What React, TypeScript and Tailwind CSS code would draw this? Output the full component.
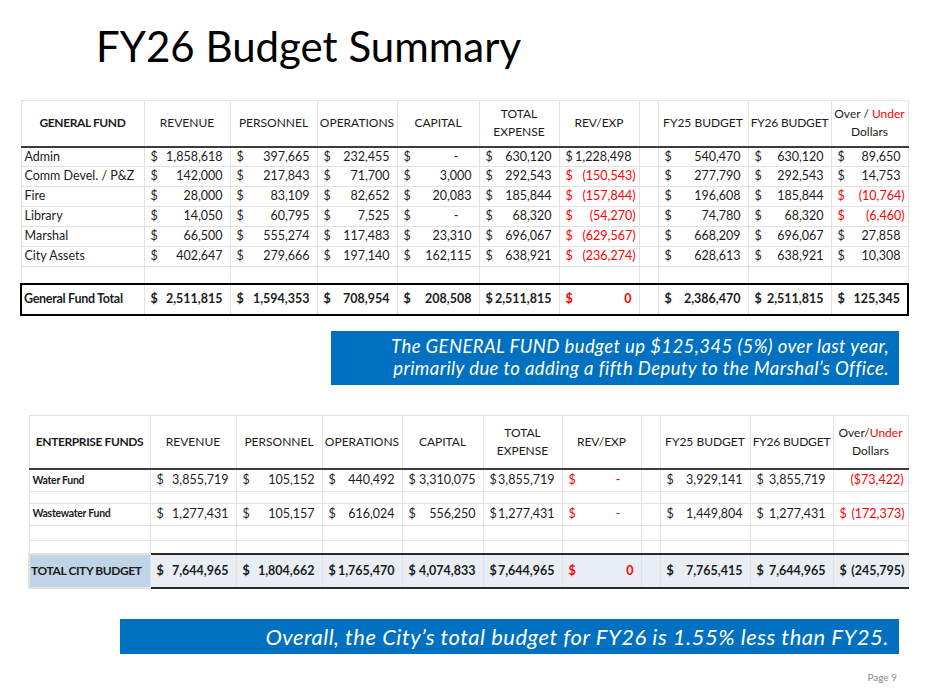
import React from "react";

type Cell =
  | { kind: "money"; v: string; red?: boolean; neg?: boolean }
  | { kind: "dash"; red?: boolean }
  | { kind: "plain"; v: string; red?: boolean }
  | { kind: "empty" };

const m = (v: string, red = false): Cell => ({ kind: "money", v, red, neg: v.startsWith("(") });
const dash = (red = false): Cell => ({ kind: "dash", red });
const plain = (v: string, red = false): Cell => ({ kind: "plain", v, red });
const E: Cell = { kind: "empty" };

const generalRows: { label: string; cells: Cell[] }[] = [
  { label: "Admin", cells: [m("1,858,618"), m("397,665"), m("232,455"), dash(), m("630,120"), m("1,228,498"), E, m("540,470"), m("630,120"), m("89,650")] },
  { label: "Comm Devel. / P&Z", cells: [m("142,000"), m("217,843"), m("71,700"), m("3,000"), m("292,543"), m("(150,543)", true), E, m("277,790"), m("292,543"), m("14,753")] },
  { label: "Fire", cells: [m("28,000"), m("83,109"), m("82,652"), m("20,083"), m("185,844"), m("(157,844)", true), E, m("196,608"), m("185,844"), m("(10,764)", true)] },
  { label: "Library", cells: [m("14,050"), m("60,795"), m("7,525"), dash(), m("68,320"), m("(54,270)", true), E, m("74,780"), m("68,320"), m("(6,460)", true)] },
  { label: "Marshal", cells: [m("66,500"), m("555,274"), m("117,483"), m("23,310"), m("696,067"), m("(629,567)", true), E, m("668,209"), m("696,067"), m("27,858")] },
  { label: "City Assets", cells: [m("402,647"), m("279,666"), m("197,140"), m("162,115"), m("638,921"), m("(236,274)", true), E, m("628,613"), m("638,921"), m("10,308")] },
];

const generalTotal: Cell[] = [m("2,511,815"), m("1,594,353"), m("708,954"), m("208,508"), m("2,511,815"), m("0", true), E, m("2,386,470"), m("2,511,815"), m("125,345")];

const enterpriseRows: { label: string; cells: Cell[] }[] = [
  { label: "Water Fund", cells: [m("3,855,719"), m("105,152"), m("440,492"), m("3,310,075"), m("3,855,719"), dash(true), E, m("3,929,141"), m("3,855,719"), plain("($73,422)", true)] },
  { label: "Wastewater Fund", cells: [m("1,277,431"), m("105,157"), m("616,024"), m("556,250"), m("1,277,431"), dash(true), E, m("1,449,804"), m("1,277,431"), m("(172,373)", true)] },
];

const cityTotal: Cell[] = [m("7,644,965"), m("1,804,662"), m("1,765,470"), m("4,074,833"), m("7,644,965"), m("0", true), E, m("7,765,415"), m("7,644,965"), m("(245,795)")];

function CellBody({ c }: { c: Cell }) {
  if (c.kind === "empty") return null;
  if (c.kind === "plain")
    return <div className={`text-right pr-[4px] ${c.red ? "text-[#ff0000]" : ""}`}>{c.v}</div>;
  if (c.kind === "dash")
    return (
      <div className={`flex justify-between pl-[6px] pr-[20px] ${c.red ? "text-[#ff0000]" : ""}`}>
        <span>$</span>
        <span>-</span>
      </div>
    );
  return (
    <div className={`flex justify-between pl-[6px] ${c.neg ? "pr-[3px]" : "pr-[7px]"} ${c.red ? "text-[#ff0000]" : ""}`}>
      <span>$</span>
      <span>{c.v}</span>
    </div>
  );
}

const grid = "border border-[#e2e2e2]";

function Header({ first, overSep }: { first: string; overSep: string }) {
  const th = `${grid} border-b-2 border-b-[#3c3c3c] font-normal text-center leading-[18px] px-0 whitespace-nowrap text-[12px]`;
  return (
    <tr>
      <th className={`${grid} border-b-2 border-b-[#3c3c3c] font-bold text-center tracking-[-0.4px] whitespace-nowrap text-[12px]`}>{first}</th>
      <th className={th}>REVENUE</th>
      <th className={th}>PERSONNEL</th>
      <th className={th}>OPERATIONS</th>
      <th className={th}>CAPITAL</th>
      <th className={th}>TOTAL<br />EXPENSE</th>
      <th className={th}>REV/EXP</th>
      <th className={th}></th>
      <th className={th}>FY25 BUDGET</th>
      <th className={`${th} tracking-[-0.2px]`}>FY26 BUDGET</th>
      <th className={th}>
        Over{overSep}<span className="text-[#ff0000]">Under</span>
        <br />
        Dollars
      </th>
    </tr>
  );
}

function Cols({ widths }: { widths: string[] }) {
  return (
    <colgroup>
      {widths.map((w, i) => (
        <col key={i} className={w} />
      ))}
    </colgroup>
  );
}

export default function App() {
  return (
    <div className="w-[935px] h-[695px] bg-white text-[#1c1c1c] overflow-hidden" style={{ fontFamily: "Lato, 'Open Sans', sans-serif" }}>
      <div className="h-[100px] pl-[96px] pt-[21px]">
        <h1 className="text-[42px] leading-[50px] text-black">FY26 Budget Summary</h1>
      </div>

      {/* general fund */}
      <table className="ml-[20px] w-[887px] table-fixed border-collapse text-[12.5px]">
        <Cols widths={["w-[123px]", "w-[86px]", "w-[87px]", "w-[80px]", "w-[82px]", "w-[80px]", "w-[80px]", "w-[19px]", "w-[90px]", "w-[83px]", "w-[77px]"]} />
        <thead className="h-[46px]">
          <Header first="GENERAL FUND" overSep=" / " />
        </thead>
        <tbody>
          {generalRows.map((r) => (
            <tr key={r.label} className="h-[20px]">
              <td className={`${grid} pl-[3px] whitespace-nowrap`}>{r.label}</td>
              {r.cells.map((c, i) => (
                <td key={i} className={`${grid} p-0 whitespace-nowrap`}>
                  <CellBody c={c} />
                </td>
              ))}
            </tr>
          ))}
          <tr className="h-[17px]">
            {Array.from({ length: 11 }).map((_, i) => (
              <td key={i} className={grid}></td>
            ))}
          </tr>
          <tr className="h-[31px] font-bold">
            <td className={`${grid} border-2 border-black border-r-[#e2e2e2] border-r pl-[2px] text-[12.5px] tracking-[-0.3px] whitespace-nowrap`}>General Fund Total</td>
            {generalTotal.map((c, i) => (
              <td key={i} className={`${grid} border-t-2 border-b-2 border-t-black border-b-black p-0 whitespace-nowrap ${i === 9 ? "border-r-2 border-r-black" : ""}`}>
                <CellBody c={c} />
              </td>
            ))}
          </tr>
        </tbody>
      </table>

      <div className="mt-[15px] ml-[331px] w-[568px] h-[54px] bg-[#0070c0] text-white italic text-right pr-[10px] pt-[4px] text-[18.5px] leading-[22px] tracking-[0.4px]">
        The GENERAL FUND budget up $125,345 (5%) over last year,
        <br />
        primarily due to adding a fifth Deputy to the Marshal’s Office.
      </div>

      {/* enterprise funds */}
      <table className="mt-[30px] ml-[28px] w-[879px] table-fixed border-collapse text-[12.5px]">
        <Cols widths={["w-[121px]", "w-[86px]", "w-[86px]", "w-[80px]", "w-[81px]", "w-[79px]", "w-[79px]", "w-[19px]", "w-[90px]", "w-[83px]", "w-[75px]"]} />
        <thead className="h-[54px]">
          <Header first="ENTERPRISE FUNDS" overSep="/" />
        </thead>
        <tbody>
          {enterpriseRows.map((r) => (
            <React.Fragment key={r.label}>
              <tr className="h-[22px]">
                <td className={`${grid} pl-[3px] text-[10.5px] font-bold tracking-[-0.3px] whitespace-nowrap`}>{r.label}</td>
                {r.cells.map((c, i) => (
                  <td key={i} className={`${grid} p-0 whitespace-nowrap`}>
                    <CellBody c={c} />
                  </td>
                ))}
              </tr>
              <tr className={r.label === "Water Fund" ? "h-[12px]" : "h-[15px]"}>
                {Array.from({ length: 11 }).map((_, i) => (
                  <td key={i} className={grid}></td>
                ))}
              </tr>
            </React.Fragment>
          ))}
          <tr className="h-[14px]">
            {Array.from({ length: 11 }).map((_, i) => (
              <td key={i} className={grid}></td>
            ))}
          </tr>
          <tr className="h-[34px] font-bold bg-[#e9eef5]">
            <td className={`${grid} border-2 border-[#2a2a2a] border-r-[#e2e2e2] border-r bg-[#bfd5e7] pl-[1px] text-[12px] tracking-[-0.4px] whitespace-nowrap`}>TOTAL CITY BUDGET</td>
            {cityTotal.map((c, i) => (
              <td key={i} className={`${grid} border-t-2 border-b-2 border-t-[#2a2a2a] border-b-[#2a2a2a] p-0 whitespace-nowrap`}>
                <CellBody c={c} />
              </td>
            ))}
          </tr>
        </tbody>
      </table>

      <div className="mt-[30px] ml-[120px] w-[779px] h-[35px] bg-[#0070c0] text-white italic text-right pr-[10px] text-[22px] leading-[35px] tracking-[0.5px]">
        Overall, the City’s total budget for FY26 is 1.55% less than FY25.
      </div>

      <div className="mt-[16px] pr-[38px] text-right text-[10px] text-[#8a8a8a]">Page 9</div>
    </div>
  );
}
